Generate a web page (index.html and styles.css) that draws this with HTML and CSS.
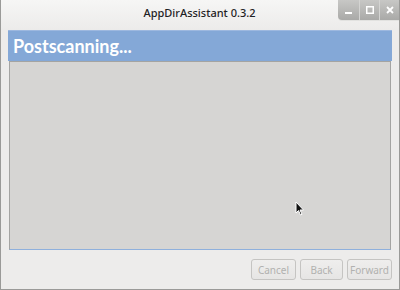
FILE: index.html
```html
<!DOCTYPE html>
<html lang="en">
<head>
  <meta charset="UTF-8">
  <title>AppDirAssistant 0.3.2</title>
  <link rel="stylesheet" href="styles.css">
</head>
<body>
<div class="window">
  <div class="titlebar">
    <div class="title">AppDirAssistant 0.3.2</div>
    <div class="wm-buttons">
      <div class="wm-btn">
        <svg width="8" height="8" viewBox="0 0 8 8"><rect x="0" y="6" width="7" height="2" fill="#fff"/></svg>
      </div>
      <div class="wm-btn">
        <svg width="8" height="8" viewBox="0 0 8 8"><rect x="0.75" y="0.75" width="6.5" height="6.5" fill="none" stroke="#fff" stroke-width="1.5"/></svg>
      </div>
      <div class="wm-btn">
        <svg width="8" height="8" viewBox="0 0 8 8"><path d="M1 1 L7 7 M7 1 L1 7" stroke="#fff" stroke-width="1.8"/></svg>
      </div>
    </div>
  </div>
  <div class="content">
    <div class="page-header">Postscanning...</div>
    <div class="page-body">
      <svg class="cursor" width="12" height="16" viewBox="0 0 12 16">
        <path d="M1 1 L1 12 L3.5 9.5 L5.5 14 L7 13.3 L5 9 L8.5 9 Z" fill="#111" stroke="#fff" stroke-width="1"/>
      </svg>
    </div>
  </div>
  <div class="actions">
    <button class="action-btn cancel" disabled>Cancel</button>
    <button class="action-btn back" disabled>Back</button>
    <button class="action-btn forward" disabled>Forward</button>
  </div>
</div>
</html>
```

FILE: styles.css
```css
body {
  margin: 0;
  background: #edeceb;
  font-family: 'Noto Sans', 'DejaVu Sans', sans-serif;
}
.window {
  width: 400px;
  height: 290px;
  box-sizing: border-box;
  border: 1px solid #9a9a98;
  border-top: none;
  background: #edeceb;
  display: flex;
  flex-direction: column;
}
.titlebar {
  height: 30px;
  display: flex;
  position: relative;
  background: linear-gradient(#f6f6f5, #ecebea);
}
.title {
  flex: 1;
  text-align: center;
  font-size: 11px;
  font-weight: 500;
  line-height: 26px;
  color: #1e2224;
  padding-right: 1px;
}
.wm-buttons {
  position: absolute;
  right: 0;
  top: 0;
  display: flex;
  height: 20px;
  border-bottom-left-radius: 4px;
  overflow: hidden;
  background: linear-gradient(#c7c7c5, #a9a9a7);
  box-shadow: 0 1px 0 #e2e2e0;
}
.wm-btn {
  width: 20px;
  height: 20px;
  display: flex;
  align-items: center;
  justify-content: center;
  border-left: 1px solid #d4d4d2;
  box-sizing: border-box;
}
.wm-btn:first-child {
  width: 21px;
  border-left: none;
}
.content {
  margin: 0 7px 0 7px;
  height: 220px;
  display: flex;
  flex-direction: column;
}
.page-header {
  height: 30px;
  background: #84a8d7;
  color: #fff;
  font-family: Lato, 'Noto Sans', sans-serif;
  font-weight: bold;
  font-size: 18px;
  line-height: 30px;
  padding-left: 5px;
  border-top: 1px solid #9db8df;
}
.page-body {
  flex: 1;
  margin: 0 1px;
  background: #d6d5d3;
  border: 1px solid #a4a4a2;
  border-bottom: 1px solid #8fb0dc;
  position: relative;
}
.cursor {
  position: absolute;
  left: 285px;
  top: 139px;
}
.actions {
  display: flex;
  justify-content: flex-end;
  gap: 4px;
  padding: 9px 7px 0 0;
}
.action-btn {
  height: 21px;
  padding: 0;
  border: 1px solid #c5c4c2;
  border-radius: 3px;
  background: linear-gradient(#efeeed, #e6e5e4);
  color: #b1b1af;
  font-family: 'Noto Sans', 'DejaVu Sans', sans-serif;
  font-size: 10px;
}
.cancel {
  width: 45px;
}
.back {
  width: 43px;
}
.forward {
  width: 45px;
}
```
